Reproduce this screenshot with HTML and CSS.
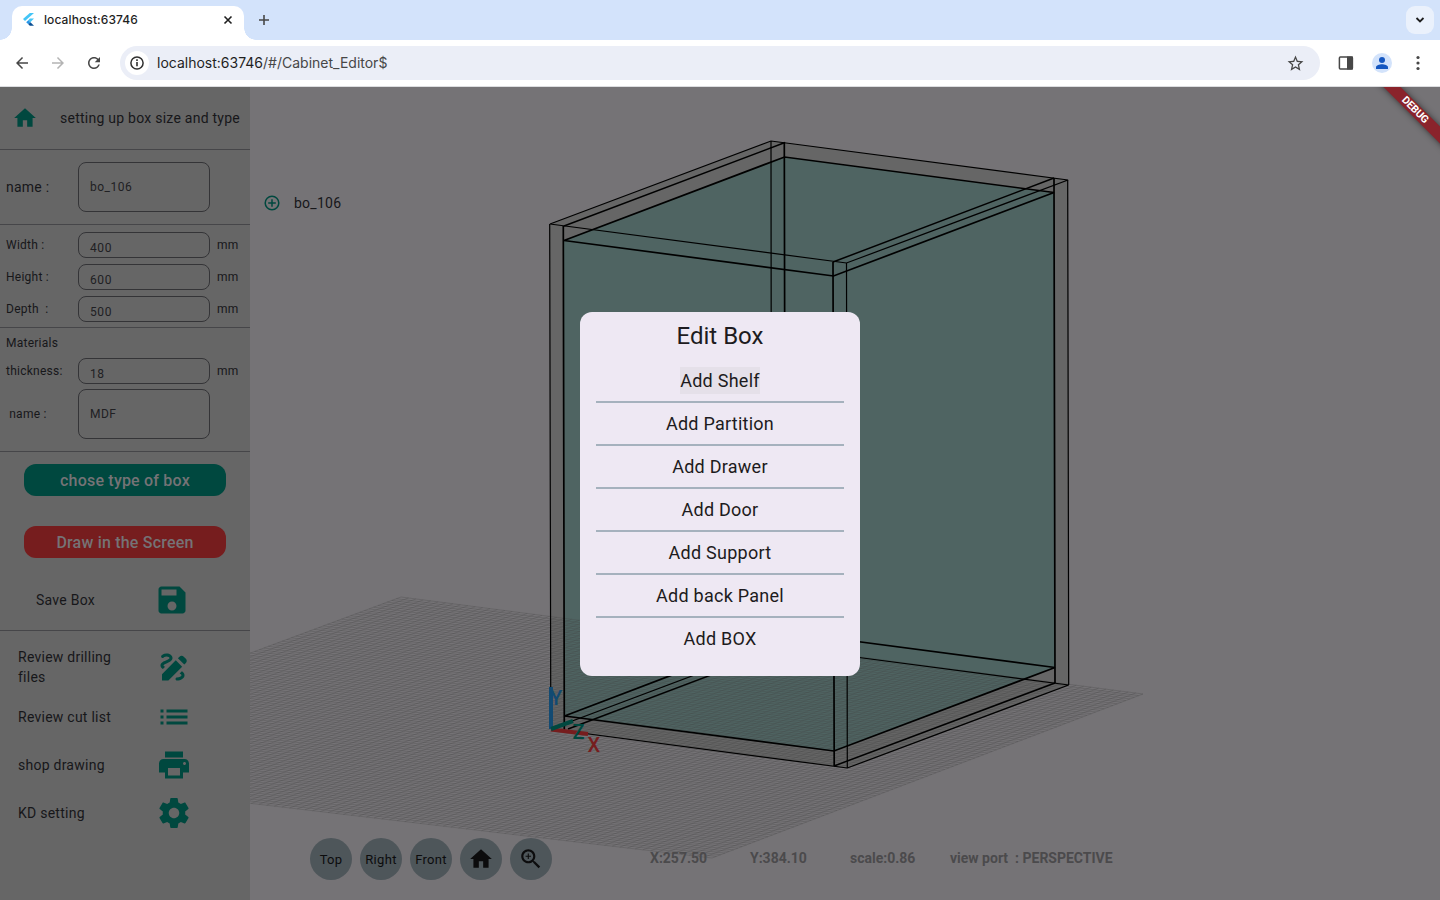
FILE: index.html
```html
<!DOCTYPE html>
<html lang="en">
<head>
<meta charset="utf-8">
<title>localhost:63746</title>
<link rel="stylesheet" href="styles.css">
</head>
<body>
<header class="tabs">
  <div class="tab">
    <svg class="flutter" width="12" height="14" viewBox="0 0 12 14"><path fill="#44c5f6" d="M6.8 0H11L2 8 0 6z"/><path fill="#44c5f6" d="M6.8 5.6H11L7.3 9.2 5.2 7.4z"/><path fill="#2795e8" d="M3.2 9.3 5.3 7.3 7.4 9.3 5.3 11.3z"/><path fill="#0b4f94" d="M5.3 11.3 7.4 9.3 11 12.7H6.8z"/></svg>
    <span class="tab-title">localhost:63746</span>
    <svg class="close" width="10" height="10" viewBox="0 0 10 10"><path d="M1.5 1.5l7 7M8.5 1.5l-7 7" stroke="#1f1f1f" stroke-width="1.6"/></svg>
  </div>
  <svg class="plus" width="12" height="12" viewBox="0 0 12 12"><path d="M6 1v10M1 6h10" stroke="#474747" stroke-width="1.6"/></svg>
  <div class="tab-menu"><svg width="10" height="8" viewBox="0 0 10 8"><path d="M1.5 2 5 5.5 8.5 2" fill="none" stroke="#1f1f1f" stroke-width="1.8"/></svg></div>
</header>
<nav class="toolbar">
  <svg class="nav-icon" viewBox="0 0 24 24" fill="#474747"><path d="M20 11H7.83l5.59-5.59L12 4l-8 8 8 8 1.41-1.41L7.83 13H20v-2z"/></svg>
  <svg class="nav-icon" viewBox="0 0 24 24" fill="#b4b4b4"><path d="M12 4l-1.41 1.41L16.17 11H4v2h12.17l-5.58 5.59L12 20l8-8z"/></svg>
  <svg class="nav-icon" viewBox="0 0 24 24" fill="#474747"><path d="M17.65 6.35C16.2 4.9 14.21 4 12 4c-4.42 0-7.99 3.58-7.99 8s3.57 8 7.99 8c3.73 0 6.84-2.55 7.73-6h-2.08c-.82 2.33-3.04 4-5.65 4-3.31 0-6-2.69-6-6s2.69-6 6-6c1.66 0 3.14.69 4.22 1.78L13 11h7V4l-2.35 2.35z"/></svg>
  <div class="address">
    <span class="info"><svg width="16" height="16" viewBox="0 0 16 16"><circle cx="8" cy="8" r="6.1" fill="none" stroke="#303030" stroke-width="1.5"/><path d="M8 4.3v1.6M8 7v4.3" stroke="#303030" stroke-width="1.6"/></svg></span>
    <span class="url">localhost:63746<span class="path">/#/Cabinet_Editor$</span></span>
    <svg class="star" viewBox="0 0 24 24" fill="#474747"><path d="M22 9.24l-7.19-.62L12 2 9.19 8.63 2 9.24l5.46 4.73L5.82 21 12 17.27 18.18 21l-1.63-7.03L22 9.24zM12 15.4l-3.76 2.27 1-4.28-3.32-2.88 4.38-.38L12 6.1l1.71 4.04 4.38.38-3.32 2.88 1 4.28L12 15.4z"/></svg>
  </div>
  <svg class="panel-icon" width="16" height="16" viewBox="0 0 16 16"><rect x="1.4" y="1.9" width="13" height="12.2" rx="1" fill="#fff" stroke="#474747" stroke-width="1.5"/><path d="M9 1.5h6v13H9z" fill="#474747"/></svg>
  <span class="avatar"><svg width="14" height="14" viewBox="0 0 14 14" fill="#1557c0"><circle cx="7" cy="4" r="3"/><path d="M1 13v-1.6C1 9.2 4.5 8.3 7 8.3s6 .9 6 3.1V13z"/></svg></span>
  <svg class="dots" width="6" height="16" viewBox="0 0 6 16" fill="#474747"><circle cx="3" cy="2.5" r="1.6"/><circle cx="3" cy="8" r="1.6"/><circle cx="3" cy="13.5" r="1.6"/></svg>
</nav>
<main class="app">
  <aside class="sidebar">
    <section class="head"><svg class="home" viewBox="0 0 24 24"><path d="M10 20v-6h4v6h5v-8h3L12 3 2 12h3v8z"/></svg><span>setting up box size and type</span></section>
    <section class="name-row"><label class="big">name :</label><div class="field tall">bo_106</div></section>
    <section class="sizes">
      <div class="row"><label>Width :</label><div class="field">400</div><span>mm</span></div>
      <div class="row"><label>Height :</label><div class="field">600</div><span>mm</span></div>
      <div class="row"><label>Depth&nbsp; :</label><div class="field">500</div><span>mm</span></div>
    </section>
    <section class="materials">
      <div class="caption">Materials</div>
      <div class="row"><label>thickness:</label><div class="field">18</div><span>mm</span></div>
      <div class="row mat"><label>&nbsp;name :</label><div class="field tall">MDF</div></div>
    </section>
    <section class="actions">
      <button class="btn green">chose type of box</button>
      <button class="btn red">Draw in the Screen</button>
      <div class="save"><span>Save Box</span><svg class="save-icon" viewBox="0 0 24 24"><path d="M17 3H5c-1.11 0-2 .9-2 2v14c0 1.1.89 2 2 2h14c1.1 0 2-.9 2-2V7l-4-4zm-5 16c-1.66 0-3-1.34-3-3s1.34-3 3-3 3 1.34 3 3-1.34 3-3 3zm3-10H5V5h10v4z"/></svg></div>
    </section>
    <section class="links">
      <div class="link two"><span>Review drilling<br>files</span><svg viewBox="0 0 24 24"><path d="M18.85 10.39l1.06-1.06c.78-.78.78-2.05 0-2.83L18.5 5.09c-.78-.78-2.05-.78-2.83 0l-1.06 1.06 4.24 4.24zm-5.66-2.83L4 16.76V21h4.24l9.19-9.19-4.24-4.25zM19 17.5c0 2.19-2.54 3.5-5 3.5-.55 0-1-.45-1-1s.45-1 1-1c1.54 0 3-.73 3-1.5 0-.47-.48-.87-1.23-1.2l1.48-1.48c1.07.63 1.75 1.47 1.75 2.68zM4.58 13.35C3.61 12.79 3 12.06 3 11c0-1.8 1.89-2.63 3.56-3.36C7.59 7.18 9 6.56 9 6c0-.41-.78-1-2-1-1.26 0-1.8.61-1.83.64-.35.41-.98.46-1.4.12-.41-.34-.49-.95-.15-1.38C3.73 4.24 4.76 3 7 3s4 1.32 4 3c0 1.87-1.93 2.72-3.64 3.47C6.42 9.88 5 10.5 5 11c0 .31.43.6 1.07.86l-1.49 1.49z"/></svg></div>
      <div class="link"><span>Review cut list</span><svg viewBox="0 0 24 24"><path d="M3 13h2v-2H3v2zm0 4h2v-2H3v2zm0-8h2V7H3v2zm4 4h14v-2H7v2zm0 4h14v-2H7v2zM7 7v2h14V7H7z"/></svg></div>
      <div class="link"><span>shop drawing</span><svg viewBox="0 0 24 24"><path d="M19 8H5c-1.66 0-3 1.34-3 3v6h4v4h12v-4h4v-6c0-1.66-1.34-3-3-3zm-3 11H8v-5h8v5zm3-7c-.55 0-1-.45-1-1s.45-1 1-1 1 .45 1 1-.45 1-1 1zm-1-9H6v4h12V3z"/></svg></div>
      <div class="link"><span>KD setting</span><svg viewBox="0 0 24 24"><path d="M19.43 12.98c.04-.32.07-.64.07-.98s-.03-.66-.07-.98l2.11-1.65c.19-.15.24-.42.12-.64l-2-3.46c-.12-.22-.39-.3-.61-.22l-2.49 1c-.52-.4-1.08-.73-1.69-.98l-.38-2.65C14.46 2.18 14.25 2 14 2h-4c-.25 0-.46.18-.49.42l-.38 2.65c-.61.25-1.17.59-1.69.98l-2.49-1c-.23-.09-.49 0-.61.22l-2 3.46c-.13.22-.07.49.12.64l2.11 1.65c-.04.32-.07.65-.07.98s.03.66.07.98l-2.11 1.65c-.19.15-.24.42-.12.64l2 3.46c.12.22.39.3.61.22l2.49-1c.52.4 1.08.73 1.69.98l.38 2.65c.03.24.24.42.49.42h4c.25 0 .46-.18.49-.42l.38-2.65c.61-.25 1.17-.59 1.69-.98l2.49 1c.23.09.49 0 .61-.22l2-3.46c.12-.22.07-.49-.12-.64l-2.11-1.65zM12 15.500c-1.930 0-3.500-1.570-3.500-3.500s1.570-3.500 3.500-3.500 3.500 1.570 3.500 3.500-1.570 3.500-3.500 3.500z"/></svg></div>
    </section>
  </aside>
  <div class="viewport">
    <svg class="scene" width="1190" height="813" viewBox="250 87 1190 813">
      <path fill="#666" d="M550 224 771 141 1068 180 1069 685 847 768 551 729z"/>
      <path fill="#4f6462" d="M564 240 785 157 1054 193 1055 667 834 751 564 716z"/>
      <path id="grid" fill="none" stroke="#444" stroke-opacity=".42" stroke-width=".65"/>
      <g fill="none" stroke="#000" stroke-width="1.2">
        <path d="M550 224 771 141 1068 180 846.500 263z"/>
        <path d="M549.700 224 550.800 729M771 141 771.500 646M1067.700 180 1068.700 685M846.500 263 847.300 768"/>
        <path d="M551 729 847.300 768 1068.700 685 771.500 646z"/>
      </g>
      <g fill="none" stroke="#000" stroke-width="1.7">
        <path d="M564 226 785 142.500M833 262 1054 178M568 729 788 646M834 766 1055 683" stroke-width="1.5"/>
        <path d="M564 240.500 784.500 157 1054 192.500 833.500 276z"/>
        <path d="M564.500 716 834 751 1055 667.500 785 632z"/>
        <path d="M563.300 226 564.300 730M784.300 142.500 785.300 648M833 262 834.200 766M1054 178 1055 683"/>
      </g>
      <g fill="none" stroke-width="4"><path stroke="#124a72" d="M551 729V687"/><path stroke="#761d1e" d="M551 729.500 588 734"/><path stroke="#00483f" d="M551 729 573 721"/></g>
      <g class="axis"><text x="550" y="705" fill="#124a72">Y</text><text x="572.500" y="739" fill="#00483f">Z</text><text x="587.500" y="752" fill="#761d1e">X</text></g>
    </svg>
    <div class="tree"><svg width="16" height="16" viewBox="0 0 16 16"><path d="M8 4.200v7.600M4.200 8h7.600" stroke="#00483f" stroke-width="1.500"/><circle cx="8" cy="8" r="6.800" fill="none" stroke="#00483f" stroke-width="1.500"/></svg><span>bo_106</span></div>
    <div class="bottom">
      <span class="round">Top</span><span class="round">Right</span><span class="round">Front</span>
      <span class="round"><svg width="26" height="26" viewBox="0 0 24 24"><path d="M10 20v-6h4v6h5v-8h3L12 3 2 12h3v8z"/></svg></span>
      <span class="round"><svg width="26" height="26" viewBox="0 0 24 24"><path d="M15.500 14h-.79l-.28-.27C15.410 12.590 16 11.110 16 9.500 16 5.910 13.090 3 9.500 3S3 5.910 3 9.500 5.910 16 9.500 16c1.610 0 3.090-.59 4.230-1.570l.27.28v.79l5 4.990L20.490 19l-4.990-5zm-6 0C7.010 14 5 11.990 5 9.500S7.010 5 9.500 5 14 7.010 14 9.500 11.990 14 9.500 14z"/><path d="M12 10h-2v2H9v-2H7V9h2V7h1v2h2v1z"/></svg></span>
      <div class="stats"><span>X:257.50</span><span>Y:384.10</span><span>scale:0.86</span><span>view port&nbsp; : PERSPECTIVE</span></div>
    </div>
    <div class="debug">DEBUG</div>
  </div>
  <div class="dialog">
    <h1>Edit Box</h1>
    <ul>
      <li><span class="focus">Add Shelf</span></li><li>Add Partition</li><li>Add Drawer</li><li>Add Door</li><li>Add Support</li><li>Add back Panel</li><li>Add BOX</li>
    </ul>
  </div>
</main>
<script src="grid.js"></script>
</body>
</html>
```
FILE: grid.js
```js
// Ground plane corners and the two families of grid lines between its edges.
const left = [-56, 767], top_ = [401, 597], right = [1143, 694], bottom = [712, 858];
const mix = (a, b, t) => [a[0] + (b[0] - a[0]) * t, a[1] + (b[1] - a[1]) * t];
const seg = (p, q) => "M" + p.map(v => v.toFixed(2)) + "L" + q.map(v => v.toFixed(2));
let d = "";
for (let i = 0; i <= 100; i++) {
  const t = i / 100;
  d += seg(mix(left, bottom, t), mix(top_, right, t));
  d += seg(mix(left, top_, t), mix(bottom, right, t));
}
document.getElementById("grid").setAttribute("d", d);
```
FILE: styles.css
```css
* { box-sizing: border-box; }
body { margin: 0; width: 1440px; height: 900px; overflow: hidden; font-family: Roboto, sans-serif; background: #fff; }
svg { display: block; flex: none; }
.tabs { height: 40px; background: #d3e3fb; display: flex; align-items: center; padding: 0 14px 0 12px; }
.tab { position: relative; width: 232px; height: 34px; margin-top: 6px; background: #fff; border-radius: 10px 10px 0 0; display: flex; align-items: center; padding: 0 11px 6px; }
.tab::before, .tab::after { content: ""; position: absolute; bottom: 0; width: 12px; height: 12px; }
.tab::before { left: -12px; background: radial-gradient(circle at 0 0, transparent 11.5px, #fff 12px); }
.tab::after { right: -12px; background: radial-gradient(circle at 100% 0, transparent 11.5px, #fff 12px); }
.tab-title { margin-left: 9px; padding-bottom: 2px; font: 500 12px Inter, sans-serif; letter-spacing: .1px; color: #1f1f1f; }
.close { margin-left: auto; }
.plus { margin-left: 14px; }
.tab-menu { margin-left: auto; margin-right: -8px; width: 28px; height: 28px; border-radius: 9px; background: #eaf1fc; display: grid; place-items: center; }
.toolbar { height: 47px; border-bottom: 1px solid #dcdde0; display: flex; align-items: center; padding: 0 17px 0 13px; }
.nav-icon { width: 18px; height: 18px; margin: 0 18px 1px 0; }
.address { width: 1200px; height: 34px; margin-left: -1px; border-radius: 17px; background: #ebeef7; display: flex; align-items: center; padding: 0 15px 0 5px; }
.info { width: 24px; height: 24px; border-radius: 50%; background: #fff; display: grid; place-items: center; }
.url { margin-left: 8px; padding-bottom: 2px; font: 14px Inter, sans-serif; color: #1f1f1f; }
.path { color: #474747; }
.star { width: 19px; height: 19px; margin-left: auto; }
.panel-icon { margin-left: 18px; }
.avatar { width: 20px; height: 20px; margin-left: 18px; border-radius: 50%; background: #d3e3fb; display: grid; place-items: center; }
.dots { margin-left: auto; margin-right: 2px; }

.app { position: relative; height: 813px; display: flex; background: #757376; color: #17171a; }
.sidebar { width: 250px; background: #666; letter-spacing: .25px; font-size: 12px; }
.sidebar section { border-bottom: 1px solid #464649; }
.sidebar section.links { border: 0; }
.sidebar svg { fill: #00483f; }
.head { height: 63px; display: flex; align-items: center; padding-left: 12px; font-size: 14px; }
.home { width: 26px; height: 26px; margin-right: 22px; }
.name-row { height: 75px; display: flex; align-items: center; padding-left: 6px; }
.sidebar label { width: 72px; flex: none; }
label.big { font-size: 14px; }
.field { width: 132px; height: 26px; border: 1px solid #343437; border-radius: 8px; padding: 8px 0 0 11px; line-height: 14px; letter-spacing: .6px; color: #202023; }
.field.tall { height: 50px; padding-top: 17px; letter-spacing: .5px; }
.sizes { height: 103px; padding: 4px 0 0 6px; }
.row { height: 32px; display: flex; align-items: center; }
.row > span { margin-left: 7px; }
.materials { height: 124px; padding: 8px 0 0 6px; }
.caption { height: 19px; line-height: 14px; }
.row.mat { height: 54px; }
.actions { height: 179px; padding: 12px 24px 0; }
.btn { display: block; width: 202px; height: 32px; border: 0; border-radius: 12px; padding: 0; font: 500 16px Roboto, sans-serif; letter-spacing: .2px; color: #757376; }
.green { background: #00483f; }
.red { margin-top: 30px; background: #761d1e; }
.save { margin: 24px 0 0 12px; display: flex; align-items: center; justify-content: space-between; font-size: 14px; }
.save-icon { width: 36px; height: 36px; margin-right: 36px; }
.links { padding: 12px 0 0 18px; font-size: 14px; line-height: 20px; }
.link { height: 48px; display: flex; align-items: center; }
.link.two { margin-bottom: 2px; }
.link span { width: 138px; }
.link svg { width: 36px; height: 36px; }
.viewport { position: relative; flex: 1; overflow: hidden; }
.scene { position: absolute; inset: 0; }
.axis { font: 500 20px Roboto, sans-serif; stroke-width: .3px; }
.tree { position: absolute; left: 14px; top: 108px; display: flex; align-items: center; gap: 14px; font-size: 14px; letter-spacing: .25px; }
.bottom { position: absolute; left: 60px; top: 751px; display: flex; align-items: center; gap: 8px; }
.round { width: 42px; height: 42px; border-radius: 50%; background: #4e565a; display: grid; place-items: center; font-size: 13px; letter-spacing: .3px; color: #0c0c0d; fill: #0c0c0d; }
.stats { display: flex; margin-left: 90px; padding-bottom: 2px; font-size: 14px; font-weight: 700; color: #4b4a4c; }
.stats span { width: 100px; white-space: nowrap; }
.debug { position: absolute; left: 1115px; top: 17px; width: 100px; height: 12px; line-height: 12px; transform: rotate(45deg); background: #8a232b; color: #fff; text-align: center; font-size: 10.5px; font-weight: 700; letter-spacing: -.1px; box-shadow: 0 0 6px #333; }
.dialog { position: absolute; left: 580px; top: 224.5px; width: 280px; height: 364px; border-radius: 12px; background: #eee8f3; padding: 8.5px 16px; text-align: center; color: #1d1b20; letter-spacing: .25px; }
.dialog h1 { margin: 0; height: 40px; line-height: 33px; font-size: 24px; font-weight: 400; letter-spacing: 0; }
.dialog ul { margin: 0; padding: 0; list-style: none; font-size: 18px; }
.dialog li { height: 43px; border-bottom: 2px solid #a5b1bd; display: flex; align-items: center; justify-content: center; }
.dialog li:last-child { border-color: transparent; }
.focus { height: 27px; line-height: 27px; background: #e5e0e9; }
```
